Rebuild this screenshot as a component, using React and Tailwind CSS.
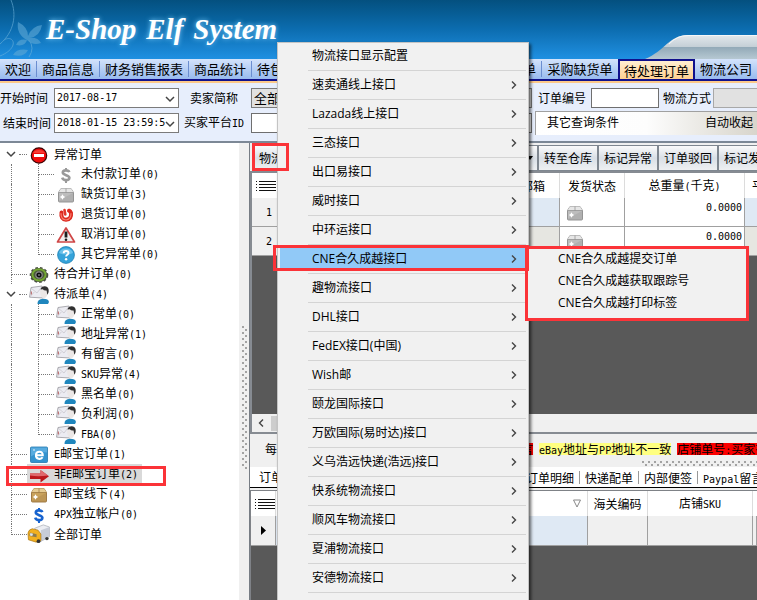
import React from "react";

const sim = "font-['DejaVu_Sans_Mono','Noto_Sans_CJK_SC',monospace]";

// Chinese glyphs at full size, half-width Latin runs in a monospaced face.
function Mixed({ children }) {
  const parts = String(children).split(/([\x20-\x7e]+)/).filter(Boolean);
  return (
    <span className="whitespace-pre">
      {parts.map((p, i) =>
        /^[\x20-\x7e]/.test(p) ? (
          <span key={i} className={`${sim} text-[10px]`}>{p}</span>
        ) : (
          p
        )
      )}
    </span>
  );
}

const Chevron = ({ className = "" }) => (
  <svg viewBox="0 0 10 10" className={`h-[10px] w-[10px] shrink-0 ${className}`} fill="none" stroke="#444" strokeWidth="1.5">
    <path d="M1 3l4 4 4-4" />
  </svg>
);
const Right = () => (
  <svg viewBox="0 0 6 8" className="h-2 w-[6px]" fill="none" stroke="#444" strokeWidth="1.4">
    <path d="M1 .5L4.500 4 1 7.500" />
  </svg>
);

/* ---------- tree icons ---------- */
const Ico = ({ children, vb = "0 0 20 20" }) => (
  <svg viewBox={vb} className="h-5 w-5">{children}</svg>
);
const Stop = () => (
  <Ico>
    <circle cx="10" cy="11.500" r="7.700" fill="#f00c0c" stroke="#3a0505" strokeWidth="1.200" />
    <path d="M4 9a6.500 5 0 0 1 12 0" fill="#ff6a5a" opacity=".5" />
    <rect x="5" y="10" width="10" height="3" fill="#fff" />
  </Ico>
);
const Dollar = ({ color }) => (
  <Ico>
    <path d="M13.300 8.200C12.500 5.800 6.800 5.600 6.800 8.600c0 3 6.600 2.200 6.600 5.200 0 3.200-6.200 3-7.200-.2" fill="none" stroke={color} strokeWidth="2.600" />
    <path d="M10 4v3M10 16v3" fill="none" stroke={color} strokeWidth="2" />
  </Ico>
);
const Box = ({ body, top, line }) => (
  <Ico>
    <path d="M5 4.500h10l2.500 4V17q0 1-1 1h-13q-1 0-1-1V8.500z" fill={body} stroke={line} strokeWidth=".9" />
    <path d="M5 4.500h10l2.500 4h-15z" fill={top} />
    <path d="M2.500 8.500h15M10 4.500v4" stroke={line} strokeWidth=".7" />
    <path d="M3 16.500L17 9v8q0 .6-.6.6H3.600z" fill={line} opacity=".25" />
    <path d="M6.500 10.300l1 1.700 1.700 1-1.700 1-1 1.700-1-1.700-1.700-1 1.700-1z" fill="#fff" />
  </Ico>
);
const GreyBox = () => <Box body="#bdbdbd" top="#e6e6e6" line="#8b8b8b" />;
const Power = () => (
  <Ico>
    <path d="M5.500 8.500q-1 6.800 4.500 7.200 5.800-.4 5-6.800-.6-1.600-2-2.200" fill="none" stroke="#dc2a20" strokeWidth="4" strokeLinecap="round" />
    <path d="M5 9.500q0 6 5 6.500 5-.6 5-6.500" fill="none" stroke="#fa7d6c" strokeWidth="1.200" strokeLinecap="round" />
    <path d="M8.500 6l.8 4.500" stroke="#e2372b" strokeWidth="2.600" strokeLinecap="round" />
  </Ico>
);
const Warn = () => (
  <Ico>
    <path d="M10 4L18.500 18h-17z" fill="#f3eeee" stroke="#cf4646" strokeWidth="1.700" strokeLinejoin="round" />
    <path d="M10 7.500v6" stroke="#1c1c1c" strokeWidth="2.800" />
    <circle cx="10" cy="15.700" r="1.300" fill="#1c1c1c" />
  </Ico>
);
const Help = () => (
  <Ico>
    <circle cx="10" cy="11" r="8.400" fill="#35a3da" stroke="#1d7fb3" strokeWidth=".8" />
    <path d="M3 9a7.200 6 0 0 1 14 0q-7 3-14 0" fill="#8fd4f3" opacity=".6" />
    <path d="M7.700 9.200c0-3 4.800-2.800 4.800-.2 0 1.800-2.400 1.800-2.400 3.600" fill="none" stroke="#fff" strokeWidth="1.900" />
    <circle cx="10.100" cy="15.200" r="1.200" fill="#fff" />
  </Ico>
);
const Gear = () => (
  <Ico>
    <ellipse cx="10" cy="11" rx="8.300" ry="7" fill="#3f4538" stroke="#4a4f43" strokeWidth="2" strokeDasharray="2.600 2" />
    <ellipse cx="10" cy="10.800" rx="6.600" ry="5.600" fill="#4a5a3a" stroke="#74a832" strokeWidth="2" />
    <circle cx="10" cy="11" r="3.200" fill="#0d0d0d" stroke="#8e8e8e" strokeWidth="1.200" />
    <circle cx="10" cy="11" r="1" fill="#777" />
  </Ico>
);
const Person = () => (
  <Ico>
    <path d="M2 3.500L13 2l1.500 12-14-.8z" fill="#ececf2" stroke="#98989e" strokeWidth=".8" />
    <path d="M2 4l6 5L13 2.500M.8 13l4.500-5" fill="none" stroke="#c4c2c8" strokeWidth=".7" />
    <path d="M2.300 7.500v3" stroke="#b55a5a" strokeWidth="1" />
    <path d="M8.500 20q-.3-5 5.500-5.300 5.500 0 6 3.300L19 20z" fill="#1f86bd" />
    <path d="M11 8q0-4 3.500-4t4.200 4q.2 4.500-3.700 6.800-3.500-1.500-4-6.800" fill="#ebe7e6" />
    <path d="M11.500 5.500q1-3.500 4.500-3.300 4 .5 3.700 5-.2 2.500-1.400 3.600l-.7-4.300q-2.600.5-3.800-1.300z" fill="#303030" />
  </Ico>
);
const Ebox = () => (
  <Ico>
    <rect x="1.500" y="3" width="17" height="15.500" rx="1" fill="#3393cf" stroke="#2377ad" strokeWidth=".8" />
    <path d="M2 3.500h16v5q-8-1-16 4z" fill="#6fbbea" opacity=".6" />
    <path d="M6.800 11.300h7c.3-4.600-6.500-4.800-6.900-.3-.2 4.400 5.200 4.800 6.700 2.300" fill="none" stroke="#fff" strokeWidth="2" />
    <circle cx="5" cy="6" r=".8" fill="#fff" />
  </Ico>
);
const Arrow = () => (
  <Ico>
    <path d="M1 9.500h10.500V6L20 12.300 11.500 18.500v-3.500H1z" fill="#bb181c" />
    <path d="M1 9.500h10.500V6l7.500 5.500Q9 13 1 11.500z" fill="#e06a6d" />
  </Ico>
);
const Truck = () => (
  <svg viewBox="0 0 24 20" className="h-5 w-6">
    <path d="M8 4L17 .5l6.500 2.200v10L14 18z" fill="#eceef3" stroke="#a2a6b0" strokeWidth=".7" />
    <path d="M14.500 6v11.500l9-5V2.700z" fill="#c7ccd8" />
    <path d="M1 9q1-4 4.500-4.500l6 1.500 3 4v7l-5 1.500L1.500 16z" fill="#f2b020" stroke="#a87411" strokeWidth=".7" />
    <path d="M3 8.500l7 1.700v3.300L2.500 12z" fill="#8a7a52" />
    <path d="M3.500 9l2.800.7-.8 2.400-2.500-.5z" fill="#dfe8ef" />
    <circle cx="12" cy="17.500" r="2" fill="#333" />
    <circle cx="20.800" cy="14.800" r="1.800" fill="#333" />
  </svg>
);

const tree = [
  { t: "异常订单", icon: <Stop />, open: true, first: true },
  { t: "未付款订单(0)", icon: <Dollar color="#9a9a9a" />, child: true },
  { t: "缺货订单(3)", icon: <GreyBox />, child: true },
  { t: "退货订单(0)", icon: <Power />, child: true },
  { t: "取消订单(0)", icon: <Warn />, child: true },
  { t: "其它异常单(0)", icon: <Help />, child: true, end: true },
  { t: "待合并订单(0)", icon: <Gear /> },
  { t: "待派单(4)", icon: <Person />, open: true },
  { t: "正常单(0)", icon: <Person />, child: true },
  { t: "地址异常(1)", icon: <Person />, child: true },
  { t: "有留言(0)", icon: <Person />, child: true },
  { t: "SKU异常(4)", icon: <Person />, child: true },
  { t: "黑名单(0)", icon: <Person />, child: true },
  { t: "负利润(0)", icon: <Person />, child: true },
  { t: "FBA(0)", icon: <Person />, child: true, end: true },
  { t: "E邮宝订单(1)", icon: <Ebox /> },
  { t: "非E邮宝订单(2)", icon: <Arrow />, selected: true },
  { t: "E邮宝线下(4)", icon: <Box body="#c9a25c" top="#e6cb92" line="#96713a" /> },
  { t: "4PX独立帐户(0)", icon: <Dollar color="#1763cf" /> },
  { t: "全部订单", icon: <Truck />, end: true },
];

const Guide = ({ end }) => (
  <span className="flex h-5 w-4 shrink-0 flex-col">
    <span className="h-[11px] border-b border-l border-dotted border-[#777]" />
    <span className={end ? "flex-1" : "flex-1 border-l border-dotted border-[#777]"} />
  </span>
);

function TreeRow({ row }) {
  return (
    <li className="relative flex h-5 items-center">
      {row.open ? (
        <span className="flex w-[27px] shrink-0 items-center">
          <Chevron className="ml-[6px]" />
          <span className="ml-[3px] w-2 border-b border-dotted border-[#777]" />
        </span>
      ) : row.child ? (
        <>
          <span className="ml-[11px] h-5 w-[27px] shrink-0 border-l border-dotted border-[#777]" />
          <Guide end={row.end} />
        </>
      ) : (
        <span className="flex shrink-0 pl-[11px]">
          <Guide end={row.end} />
        </span>
      )}
      <span className={row.selected ? "flex h-5 items-center bg-[#d9d9d9]" : "flex h-5 items-center"}>
        <span className="flex w-[23px] shrink-0 items-center justify-center">{row.icon}</span>
        <button type="button" className="flex h-5 items-center px-1">
          <Mixed>{row.t}</Mixed>
        </button>
      </span>
      {row.selected && <span className="absolute top-[2px] left-[6px] h-5 w-40 border-3 border-[#fb3338]" />}
    </li>
  );
}

const menu = ["物流接口显示配置", "速卖通线上接口", "Lazada线上接口", "三态接口", "出口易接口", "威时接口", "中环运接口", "CNE合久成越接口", "趣物流接口", "DHL接口", "FedEX接口(中国)", "Wish邮", "颐龙国际接口", "万欧国际(易时达)接口", "义乌浩远快递(浩远)接口", "快系统物流接口", "顺风车物流接口", "夏浦物流接口", "安德物流接口"];

function Menu() {
  return (
    <div role="menu" className="absolute top-[42px] left-[277px] z-10 h-[600px] w-[252px] border border-[#c4c4c4] bg-[#f1f1f1] pt-[2px] font-['Open_Sans','Noto_Sans_CJK_SC',sans-serif] shadow-[2px_2px_3px_rgba(0,0,0,0.6)]">
      {menu.map((m, i) => (
        <div key={m} className="px-[2px]">
          <button type="button" role="menuitem" className={`flex h-[22px] w-full items-center justify-between pr-[9px] pl-8 ${i === 7 ? "bg-[#91c9f7]" : ""}`}>
            <span>{m}</span>
            {i > 0 && <Right />}
          </button>
          <div className="flex h-[7px] items-center pl-7">
            <div className="h-px w-full bg-[#d4d4d4]" />
          </div>
        </div>
      ))}
    </div>
  );
}

function SubMenu() {
  return (
    <div role="menu" className="absolute top-[246px] left-[525px] z-20 flex w-56 flex-col border-3 border-[#fb3338] bg-[#f1f1f1] pb-[3px] font-['Open_Sans','Noto_Sans_CJK_SC',sans-serif] leading-5">
      {["CNE合久成越提交订单", "CNE合久成越获取跟踪号", "CNE合久成越打印标签"].map((t) => (
        <button type="button" role="menuitem" key={t} className="h-[22px] pb-[2px] pl-[30px] text-left">{t}</button>
      ))}
    </div>
  );
}

function Banner() {
  return (
    <header className="relative h-[59px] shrink-0 bg-linear-to-b from-[#04507f] via-[#0c6db0] to-[#1f90e2]">
      <svg viewBox="0 0 60 59" className="absolute top-0 left-0 h-[59px] w-[60px]" fill="#5fa9d6" opacity=".6">
        <path d="M0 44C14 32 17 15 11 0M0 56C20 48 14 34 4 40" fill="none" stroke="#6fb3dc" strokeWidth="1" />
        <path d="M27 40Q16 34 18 22q10 5 10 14Q32 26 42 25q-2 12-13 13 9-1 12 5-8 3-14-3-2 7-11 5 3-7 11-5zM13 55q4-7 15-5-4 8-15 5z" />
        <path d="M29 40q6 8 0 17" fill="none" stroke="#6fb3dc" />
      </svg>
      <h1 className="absolute top-[11px] left-[46px] flex gap-[10px] font-['Liberation_Serif',serif] text-[29px] leading-9 font-bold whitespace-pre text-white italic [text-shadow:0_0_5px_#7cd0ff]">
        <span>E-Shop</span>
        <span>Elf</span>
        <span>System</span>
      </h1>
      <svg viewBox="0 0 112 24" preserveAspectRatio="none" className="absolute right-0 bottom-0 h-6 w-28">
        <defs>
          <linearGradient id="swoosh" x1="0" y1="0" x2="0" y2="1">
            <stop offset="0" stopColor="#e3e8ec" />
            <stop offset=".48" stopColor="#c5d0d7" />
            <stop offset=".52" stopColor="#93aab8" />
            <stop offset="1" stopColor="#b6c8d2" />
          </linearGradient>
        </defs>
        <path d="M0 24C20 16 24 0 43 0H112V24Z" fill="url(#swoosh)" />
        <path d="M24 9Q32 .5 43 .5H112" fill="none" stroke="#f5f7f8" />
      </svg>
    </header>
  );
}

const Tab = ({ children, className = "" }) => (
  <button type="button" className={`h-4 shrink-0 border-r border-[#6b8ed0] px-[5px] leading-4 ${className}`}>{children}</button>
);

function Drop({ id, value, className, grey }) {
  return (
    <span className={`relative flex h-5 ${className}`}>
      <select id={id} className={`h-5 w-full appearance-none overflow-hidden border-[1px] border-[#7b7b7b] pr-[13px] pl-[2px] ${grey ? "bg-[#e1e1e1] text-[13px]" : `bg-white text-[10px] ${sim}`}`}>
        <option>{value}</option>
      </select>
      <Chevron className="pointer-events-none absolute top-[6px] right-1" />
    </span>
  );
}

function Filters() {
  return (
    <form className="flex h-[58px] shrink-0 flex-col gap-[3px] overflow-hidden bg-[#e7eefc] pt-[5px]">
      <div className="flex h-5 items-center">
        <label htmlFor="from" className="w-[54px] shrink-0">开始时间</label>
        <Drop id="from" value="2017-08-17" className="w-[125px] shrink-0" />
        <label htmlFor="seller" className="ml-[11px] w-[61px] shrink-0">卖家简称</label>
        <Drop id="seller" value="全部" grey className="w-[281px] shrink-0" />
        <label htmlFor="orderno" className="ml-[6px] w-[53px] shrink-0">订单编号</label>
        <input id="orderno" className="h-5 w-[68px] shrink-0 border border-[#6f6f6f] bg-white px-1" />
        <label htmlFor="ship" className="ml-1 w-[50px] shrink-0">物流方式</label>
        <select id="ship" className="h-5 min-w-[60px] flex-1 appearance-none border border-[#a8a8a8] bg-[#e1e1e1]" />
      </div>
      <div className="flex h-6 items-center">
        <label htmlFor="to" className="w-[54px] shrink-0 pl-[3px]">结束时间</label>
        <Drop id="to" value="2018-01-15 23:59:5" className="w-[125px] shrink-0" />
        <label htmlFor="buyer" className="ml-[5px] w-[67px] shrink-0"><Mixed>买家平台ID</Mixed></label>
        <input id="buyer" className="h-5 w-[281px] shrink-0 border border-[#6f6f6f] bg-white px-1" />
        <div className="ml-[3px] flex h-6 min-w-[222px] flex-1 items-center justify-between border-t border-l border-[#a0a0a0] bg-linear-to-r from-white via-[#fdfdfd] to-[#d8d5cc] pr-1 pb-1 pl-[11px]">
          <span>其它查询条件</span>
          <button type="button">自动收起</button>
        </div>
      </div>
    </form>
  );
}

const Dots = ({ id }) => (
  <svg className="h-full w-full" aria-hidden="true">
    <defs>
      <pattern id={id} width="6" height="6" patternUnits="userSpaceOnUse">
        <rect width="2" height="2" fill="#a3a3a3" />
        <rect x="3" y="3" width="2" height="2" fill="#a3a3a3" />
      </pattern>
    </defs>
    <rect width="100%" height="100%" fill={`url(#${id})`} />
  </svg>
);

const Lines = () => (
  <svg viewBox="0 0 20 11" className="ml-1 h-[11px] w-5 shrink-0" stroke="#111">
    <path d="M3 1.500h17M3 4.500h17M3 7.500h17M3 10.500h17" />
    <path d="M0 1.500h1M0 4.500h1M0 7.500h1M0 10.500h1" />
  </svg>
);

const toolButton = "h-[26px] w-[60px] shrink-0 overflow-hidden border border-[#7f8790] bg-linear-to-b from-[#fbfbfb] via-[#d9dfe6] to-[#eef0f2] text-center whitespace-nowrap";

function OrdersGrid() {
  const cell = "border-r border-b border-[#a0a0a0] p-0";
  return (
    <div className="flex h-[263px] shrink-0 flex-col overflow-hidden border-y-2 border-l-2 border-[#868b92] bg-[#595959]">
      <table className="w-full min-w-[506px] table-fixed border-separate border-spacing-0">
        <colgroup>
          <col className="w-[38px]" />
          <col className="w-[270px]" />
          <col className="w-[65px]" />
          <col className="w-[120px]" />
          <col />
        </colgroup>
        <thead>
          <tr className="h-[25px] bg-white">
            <th className="p-0"><Lines /></th>
            <th className="border-r border-[#dcdcdc] p-0 pr-[14px] text-right font-normal">邮箱</th>
            <th className="border-r border-[#dcdcdc] p-0 font-normal">发货状态</th>
            <th className="border-r border-[#dcdcdc] p-0 font-normal"><Mixed>总重量(千克)</Mixed></th>
            <th className="overflow-hidden p-0 pl-[7px] text-left font-normal">平</th>
          </tr>
        </thead>
        <tbody>
          {[1, 2].map((n) => (
            <tr key={n} className="h-[29px]">
              <td className={`${cell} bg-[#f0f0f0] pl-[14px]`}><Mixed>{n}</Mixed></td>
              <td className={`${cell} ${n === 1 ? "bg-[#dfe9f4]" : "bg-[#e6e6e1]"}`} />
              <td className={`${cell} bg-white pl-[5px]`}><GreyBox /></td>
              <td className={`${cell} bg-white pr-[2px] text-right align-top leading-4`}><Mixed>0.0000</Mixed></td>
              <td className={`${cell} ${n === 1 ? "bg-[#dfe9f4]" : "bg-[#e6e6e1]"}`} />
            </tr>
          ))}
        </tbody>
      </table>
      <div className="mt-auto flex h-[18px] items-center bg-[#f0f0f0]">
        <span className="flex w-[19px] rotate-180 justify-center"><Right /></span>
        <span className="h-[15px] w-[200px] bg-[#cdcdcd]" />
      </div>
    </div>
  );
}

function DetailGrid() {
  const cell = "border-r border-b border-[#a0a0a0] p-0";
  return (
    <div className="mt-[2px] min-h-0 flex-1 overflow-hidden border-t border-l border-[#7f8287] bg-[#595959]">
      <table className="w-full min-w-[506px] table-fixed border-separate border-spacing-0">
        <colgroup>
          <col className="w-[25px]" />
          <col className="w-[312px]" />
          <col className="w-[60px]" />
          <col className="w-[105px]" />
          <col />
        </colgroup>
        <thead>
          <tr className="h-[25px] bg-white">
            <th className="border-r border-[#dcdcdc] p-0"><Lines /></th>
            <th className="border-r border-[#dcdcdc] p-0 pr-[6px] text-right font-normal">
              <svg viewBox="0 0 8 9" className="ml-auto h-[9px] w-2" fill="none" stroke="#888"><path d="M.5 1h7L4 8z" /></svg>
            </th>
            <th className="border-r border-[#dcdcdc] p-0 font-normal">海关编码</th>
            <th className="border-r border-[#dcdcdc] p-0 font-normal"><Mixed>店铺SKU</Mixed></th>
            <th className="p-0" />
          </tr>
        </thead>
        <tbody>
          <tr className="h-[30px] bg-[#f0f0f0]">
            <td className={cell}>
              <svg viewBox="0 0 5 9" className="ml-[10px] h-[9px] w-[5px]"><path d="M0 0l5 4.500L0 9z" /></svg>
            </td>
            <td className={`${cell} bg-[#dfe9f4]`} />
            <td className={cell} />
            <td className={cell} />
            <td className={cell} />
          </tr>
        </tbody>
      </table>
    </div>
  );
}

function Workspace() {
  return (
    <main className="flex min-w-0 flex-1 flex-col overflow-hidden border-l border-[#777d85]">
      <div className="relative flex h-[28px] shrink-0 items-end gap-0 bg-[#f0f0f0] pl-[3px]">
        <button type="button" className={`${toolButton} text-left`}><span className="pl-[5px]">物流接口</span></button>
        <button type="button" aria-label="更多" className="flex h-[26px] w-[225px] shrink-0 items-center justify-end border border-[#7f8790] bg-linear-to-b from-[#fbfbfb] via-[#d9dfe6] to-[#eef0f2] pr-1">
          <svg viewBox="0 0 6 4" className="h-1 w-[6px]"><path d="M0 0h6L3 4z" /></svg>
        </button>
        {["转至仓库", "标记异常", "订单驳回", "标记发货"].map((t) => (
          <button type="button" key={t} className={toolButton}>{t}</button>
        ))}
        <span className="absolute top-0 left-[2px] z-20 h-7 w-[37px] border-3 border-[#fb3338]" />
      </div>
      <OrdersGrid />
      <div className="flex h-[33px] shrink-0 flex-col bg-[#f0f0f0]">
        <div className="flex h-[27px] items-end gap-[6px] pb-[6px] pl-[15px] whitespace-nowrap">
          <span className="h-3 w-[230px] shrink-0 leading-3">每页</span>
          <span className="h-3 w-[32px] shrink-0 bg-[#fb0000] text-right leading-3">言</span>
          <span className="h-3 shrink-0 bg-[#ffff80] leading-3"><Mixed>eBay地址与PP地址不一致</Mixed></span>
          <span className="h-3 shrink-0 bg-[#fb0000] leading-3"><Mixed>店铺单号:买家有多单</Mixed></span>
        </div>
        <div className="ml-[392px] h-[5px]"><Dots id="dots-h" /></div>
      </div>
      <nav className="flex h-[21px] shrink-0 items-center border-b border-black bg-white pl-1 whitespace-nowrap">
        <button type="button" className="w-[267px] shrink-0 px-[5px] text-left">订单</button>
        {["订单明细", "快递配单", "内部便签", "Paypal留言"].map((t) => (
          <button type="button" key={t} className="h-[13px] shrink-0 border-r border-[#999] px-[5px] leading-[13px]"><Mixed>{t}</Mixed></button>
        ))}
      </nav>
      <DetailGrid />
    </main>
  );
}

export default function App() {
  return (
    <div className="relative flex h-screen flex-col overflow-hidden bg-[#f0f0f0] font-['Noto_Sans_CJK_SC',sans-serif] text-[12px] leading-4 text-black">
      <Banner />
      <nav className="flex h-[22px] shrink-0 items-center overflow-hidden border-b-2 border-[#10108c] bg-linear-to-b from-[#d4e3fb] to-[#98bbee] text-[13px] whitespace-nowrap">
        <Tab>欢迎</Tab>
        <Tab>商品信息</Tab>
        <Tab>财务销售报表</Tab>
        <Tab>商品统计</Tab>
        <Tab className="w-[76px] text-left">待包装订单</Tab>
        <Tab className="w-[214px] text-right">待派单</Tab>
        <Tab className="w-[76px] border-r-0">采购缺货单</Tab>
        <button type="button" aria-current="page" className="mt-px h-[21px] shrink-0 border-2 border-b-0 border-[#10108c] bg-linear-to-b from-[#ffefd2] to-[#ffce8c] px-1 leading-4">待处理订单</button>
        <Tab className="border-r-0">物流公司</Tab>
      </nav>
      <div className="h-[2px] shrink-0 bg-[#fcc98a]" />
      <Filters />
      <div className="flex min-h-0 flex-1 border-t-2 border-[#7c8896]">
        <aside className="w-[239px] shrink-0 overflow-hidden bg-white pt-px">
          <ul>
            {tree.map((r, i) => (
              <TreeRow key={i} row={r} />
            ))}
          </ul>
        </aside>
        <div className="w-[10px] shrink-0 pt-[183px] pl-[3px]">
          <div className="h-36 w-[5px]"><Dots id="dots-v" /></div>
        </div>
        <Workspace />
      </div>
      <Menu />
      <SubMenu />
      <span className="pointer-events-none absolute top-[245px] left-[273px] z-20 h-[26px] w-64 border-3 border-[#fb3338]" />
    </div>
  );
}
